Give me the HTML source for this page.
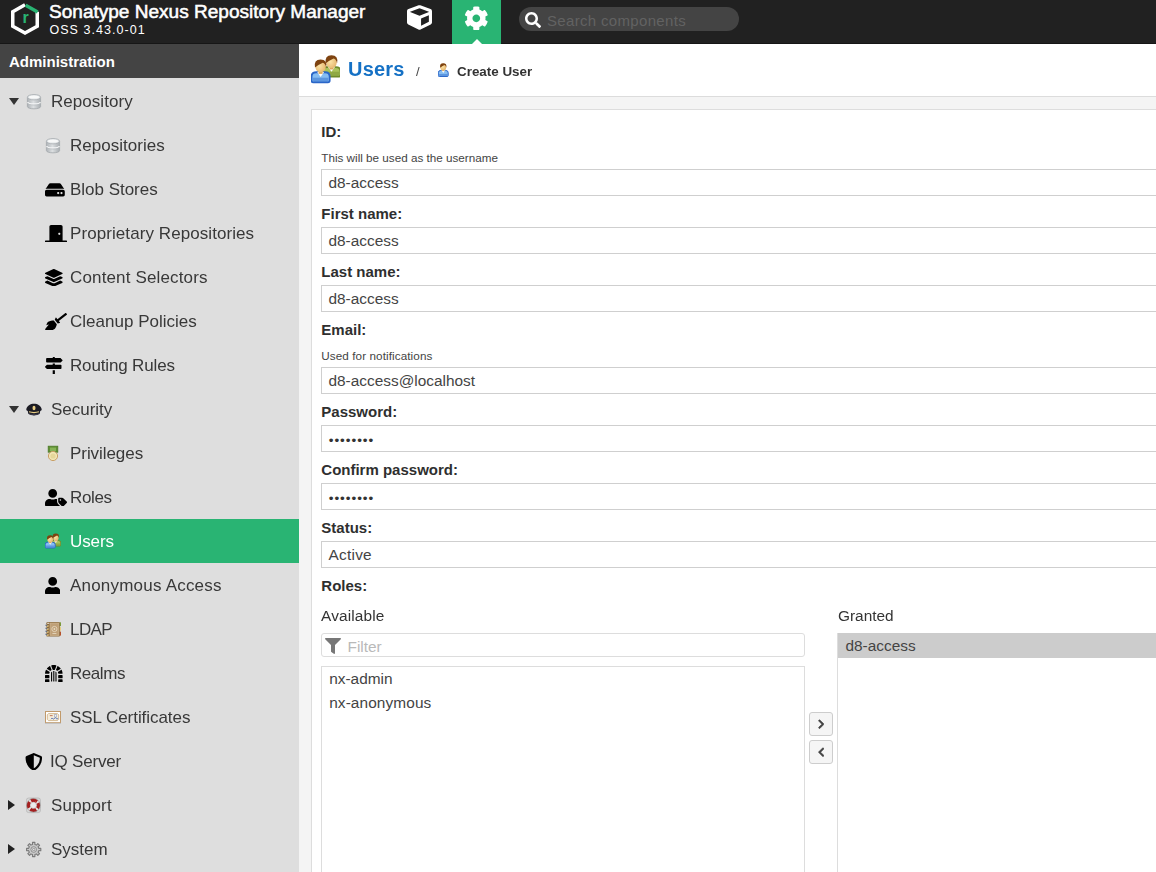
<!DOCTYPE html>
<html lang="en">
<head>
<meta charset="utf-8">
<title>Nexus Repository Manager</title>
<style>
*{box-sizing:border-box;margin:0;padding:0}
html,body{width:1156px;height:872px;overflow:hidden;background:#f4f4f4;font-family:"Liberation Sans",Arial,sans-serif;color:#333}
body{position:relative}
.tx{position:absolute;white-space:nowrap}
#header{position:absolute;left:0;top:0;width:1156px;height:44px;background:#212121}
#hline{position:absolute;left:0;top:43px;width:1156px;height:1px;background:#161616}
#modeadmin{position:absolute;left:452px;top:0;width:49px;height:44px;background:#29b473}
#modetri{position:absolute;left:471.500px;top:39px;width:0;height:0;border-left:5px solid transparent;border-right:5px solid transparent;border-bottom:5px solid #fff}
#search{position:absolute;left:519px;top:7px;width:220px;height:23.700px;border-radius:12px;background:#444}
#side{position:absolute;left:0;top:44px;width:299px;height:828px;background:#dedede}
#sidehead{position:absolute;left:0;top:44px;width:299px;height:34px;background:#444}
#selrow{position:absolute;left:0;top:519px;width:299px;height:44px;background:#29b473}
#crumb{position:absolute;left:299px;top:44px;width:857px;height:53px;background:#fff;border-bottom:1px solid #dcdcdc}
#panel{position:absolute;left:311px;top:109px;width:900px;height:800px;background:#fff;border:1px solid #ddd}
.inp{position:absolute;left:321px;width:900px;height:27px;border:1px solid #cfcfcf;background:#fff}
.box{position:absolute;background:#fff;border:1px solid #ddd}
.btn{position:absolute;left:809px;width:24px;height:24px;border:1px solid #cdcdcd;border-radius:3px;background:#f5f5f5}
.arr{position:absolute;width:0;height:0}
</style>
</head>
<body>
<svg width="0" height="0" style="position:absolute"><defs><linearGradient id="gdb" x1="0" x2="1" y1="0" y2="0"><stop offset="0" stop-color="#aeb3b7"/><stop offset=".45" stop-color="#dcdfe1"/><stop offset="1" stop-color="#a9aeb2"/></linearGradient><radialGradient id="gface" cx=".4" cy=".45" r=".7"><stop offset="0" stop-color="#fbe3a6"/><stop offset="1" stop-color="#e3b066"/></radialGradient></defs></svg>

<div id="header"></div><div id="hline"></div>
<svg style="position:absolute;left:8px;top:0" width="34" height="40" viewBox="0 0 34 40"><path d="M29.250 11.800V26.200L17 33.100L4.750 26.200V11.800L17 4.800" fill="none" stroke="#fff" stroke-width="3.500" stroke-linejoin="miter"/><path d="M17.600 5.150L29.600 12" fill="none" stroke="#29b473" stroke-width="3.500"/><text x="17.600" y="23.400" text-anchor="middle" font-family="Liberation Sans, Arial, sans-serif" font-weight="bold" font-size="16" fill="#29b473">r</text></svg>
<div class="tx" style="left:49.3px;top:1px;font-size:17.5px;line-height:23px;font-weight:normal;color:#fff;-webkit-text-stroke:0.5px #fff;transform:scaleX(1.088);transform-origin:0 0;">Sonatype Nexus Repository Manager</div>
<div class="tx" style="left:49.4px;top:22px;font-size:12.5px;line-height:16px;font-weight:normal;color:#fff;letter-spacing:1.05px;">OSS 3.43.0-01</div>
<svg style="position:absolute;left:407.2px;top:5.4px" width="25.00" height="25" viewBox="0 0 512 512"><path fill="#fff" d="M239.1 6.3l-208 78c-18.700 7-31.100 25-31.100 45v225.100c0 18.200 10.300 34.800 26.500 42.900l208 104c13.500 6.800 29.400 6.800 42.900 0l208-104c16.300-8.100 26.500-24.800 26.500-42.900V129.300c0-20-12.400-37.900-31.100-44.900l-208-78C262 2.200 250 2.200 239.100 6.300zM256 68.400l192 72v1.100l-192 78-192-78v-1.100l192-72zm32 356V275.500l160-65v133.900l-160 80z"/></svg>
<div id="modeadmin"></div><div id="modetri"></div>
<svg style="position:absolute;left:464.2px;top:5.6px" width="24.60" height="24.6" viewBox="0 0 512 512"><path fill="#fff" d="M487.4 315.7l-42.600-24.600c4.300-23.200 4.300-47 0-70.200l42.600-24.600c4.900-2.800 7.100-8.600 5.500-14-11.100-35.600-30-67.800-54.700-94.600-3.800-4.100-10-5.100-14.800-2.300L380.800 110c-17.900-15.400-38.500-27.300-60.800-35.100V25.800c0-5.600-3.900-10.500-9.400-11.700-36.700-8.200-74.300-7.800-109.200 0-5.500 1.200-9.400 6.100-9.400 11.700V75c-22.200 7.900-42.800 19.800-60.800 35.100L88.700 85.500c-4.900-2.800-11-1.900-14.800 2.300-24.700 26.700-43.600 58.900-54.700 94.600-1.700 5.400.6 11.200 5.500 14L67.300 221c-4.300 23.200-4.300 47 0 70.200l-42.600 24.600c-4.900 2.800-7.100 8.600-5.500 14 11.100 35.600 30 67.800 54.700 94.600 3.800 4.100 10 5.100 14.800 2.300l42.600-24.600c17.900 15.400 38.500 27.300 60.800 35.100v49.200c0 5.600 3.900 10.500 9.400 11.700 36.700 8.200 74.300 7.800 109.200 0 5.500-1.200 9.400-6.100 9.400-11.700v-49.200c22.200-7.900 42.800-19.800 60.800-35.100l42.600 24.600c4.900 2.800 11 1.900 14.800-2.300 24.700-26.700 43.600-58.900 54.700-94.600 1.500-5.500-.7-11.300-5.600-14.100zM256 336c-44.100 0-80-35.900-80-80s35.900-80 80-80 80 35.900 80 80-35.900 80-80 80z"/></svg>
<div id="search"></div>
<svg style="position:absolute;left:525px;top:12.1px" width="16.00" height="16" viewBox="0 0 512 512"><path fill="#fff" d="M505 442.7L405.3 343c-4.500-4.500-10.600-7-17-7H372c27.600-35.300 44-79.700 44-128C416 93.100 322.900 0 208 0S0 93.100 0 208s93.100 208 208 208c48.300 0 92.700-16.400 128-44v16.300c0 6.400 2.500 12.500 7 17l99.700 99.700c9.400 9.400 24.600 9.400 33.900 0l28.300-28.300c9.400-9.400 9.400-24.600.1-34zM208 336c-70.700 0-128-57.200-128-128 0-70.700 57.200-128 128-128 70.700 0 128 57.200 128 128 0 70.700-57.200 128-128 128z"/></svg>
<div class="tx" style="left:547px;top:11px;font-size:15px;line-height:20px;font-weight:normal;color:#626262;letter-spacing:0.33px;">Search components</div>
<div id="side"></div><div id="sidehead"></div><div id="selrow"></div>
<div class="tx" style="left:9px;top:52px;font-size:15px;line-height:20px;font-weight:bold;color:#fff;">Administration</div>
<div class="arr" style="left:9px;top:97.5px;border-left:5px solid transparent;border-right:5px solid transparent;border-top:7px solid #333"></div>
<svg style="position:absolute;left:26px;top:93px" width="16" height="17" viewBox="0 0 16 17"><path d="M1.400 4.200v9.300c0 3.100 13.200 3.100 13.200 0V4.200z" fill="url(#gdb)" stroke="#a3a8ac" stroke-width=".8"/><path d="M1.800 8.900c0 2.700 12.400 2.700 12.400 0" fill="none" stroke="#f5f6f7" stroke-width="1.300"/><path d="M1.800 10c0 2.700 12.400 2.700 12.400 0" fill="none" stroke="#a9aeb2" stroke-width=".5"/><ellipse cx="8" cy="4.200" rx="6.600" ry="2.700" fill="#dfe2e4" stroke="#a8adb1" stroke-width=".8"/><ellipse cx="8" cy="4" rx="5.200" ry="1.600" fill="#f8f9f9"/></svg>
<div class="tx" style="left:51px;top:91px;font-size:17px;line-height:22px;font-weight:normal;color:#383838;letter-spacing:0.044px;will-change:transform;">Repository</div>
<svg style="position:absolute;left:45px;top:137px" width="16" height="17" viewBox="0 0 16 17"><path d="M1.400 4.200v9.300c0 3.100 13.200 3.100 13.200 0V4.200z" fill="url(#gdb)" stroke="#a3a8ac" stroke-width=".8"/><path d="M1.800 8.900c0 2.700 12.400 2.700 12.400 0" fill="none" stroke="#f5f6f7" stroke-width="1.300"/><path d="M1.800 10c0 2.700 12.400 2.700 12.400 0" fill="none" stroke="#a9aeb2" stroke-width=".5"/><ellipse cx="8" cy="4.200" rx="6.600" ry="2.700" fill="#dfe2e4" stroke="#a8adb1" stroke-width=".8"/><ellipse cx="8" cy="4" rx="5.200" ry="1.600" fill="#f8f9f9"/></svg>
<div class="tx" style="left:70px;top:135px;font-size:17px;line-height:22px;font-weight:normal;color:#383838;letter-spacing:0.029px;will-change:transform;">Repositories</div>
<svg style="position:absolute;left:45px;top:180.89999999999998px" width="19.80" height="17.6" viewBox="0 0 576 512"><path fill="#000" d="M576 304v96c0 26.510-21.490 48-48 48H48c-26.510 0-48-21.490-48-48v-96c0-26.510 21.490-48 48-48h480c26.510 0 48 21.490 48 48zm-48-80a79.557 79.557 0 0 1 30.777 6.165L462.250 85.374A48.003 48.003 0 0 0 422.311 64H153.689a48 48 0 0 0-39.938 21.374L17.223 230.165A79.557 79.557 0 0 1 48 224h480zm-48 96c-17.673 0-32 14.327-32 32s14.327 32 32 32 32-14.327 32-32-14.327-32-32-32zm-96 0c-17.673 0-32 14.327-32 32s14.327 32 32 32 32-14.327 32-32-14.327-32-32-32z"/></svg>
<div class="tx" style="left:70px;top:179px;font-size:17px;line-height:22px;font-weight:normal;color:#383838;letter-spacing:-0.02px;will-change:transform;">Blob Stores</div>
<svg style="position:absolute;left:45px;top:224.89999999999998px" width="22.00" height="17.6" viewBox="0 0 640 512"><path fill="#000" d="M624 448H512V50.800C512 22.780 490.470 0 464 0H175.990c-26.470 0-48 22.780-48 50.800V448H16c-8.840 0-16 7.160-16 16v32c0 8.840 7.160 16 16 16h608c8.840 0 16-7.160 16-16v-32c0-8.840-7.160-16-16-16zM415.990 288c-17.670 0-32-14.330-32-32s14.330-32 32-32 32 14.330 32 32c.010 17.670-14.320 32-32 32z"/></svg>
<div class="tx" style="left:70px;top:223px;font-size:17px;line-height:22px;font-weight:normal;color:#383838;letter-spacing:0.077px;will-change:transform;">Proprietary Repositories</div>
<svg style="position:absolute;left:45px;top:268.9px" width="17.60" height="17.6" viewBox="0 0 512 512"><path fill="#000" d="M12.410 148.020l232.940 105.670c6.800 3.090 14.490 3.090 21.290 0l232.940-105.670c16.550-7.510 16.550-32.520 0-40.030L266.650 2.310a25.607 25.607 0 0 0-21.290 0L12.410 107.980c-16.550 7.510-16.550 32.530 0 40.040zm487.180 88.280l-58.090-26.330-161.640 73.270c-7.560 3.430-15.590 5.170-23.860 5.170s-16.290-1.740-23.860-5.170L70.510 209.970l-58.100 26.330c-16.550 7.500-16.550 32.500 0 40l232.940 105.590c6.800 3.080 14.490 3.080 21.290 0L499.590 276.300c16.550-7.500 16.550-32.500 0-40zm0 127.800l-57.870-26.230-161.860 73.370c-7.560 3.430-15.590 5.170-23.860 5.170s-16.290-1.740-23.860-5.170L70.290 337.870 12.410 364.100c-16.550 7.500-16.550 32.500 0 40l232.940 105.590c6.800 3.080 14.490 3.080 21.290 0L499.590 404.100c16.550-7.500 16.550-32.500 0-40z"/></svg>
<div class="tx" style="left:70.1px;top:267px;font-size:17px;line-height:22px;font-weight:normal;color:#383838;letter-spacing:0.147px;will-change:transform;">Content Selectors</div>
<svg style="position:absolute;left:45px;top:312.9px" width="22.00" height="17.6" viewBox="0 0 640 512"><path fill="#000" d="M256.470 216.770l86.730 109.180s-16.600 102.360-76.570 150.120C206.660 523.850 0 510.190 0 510.190s3.800-23.140 11-55.430l94.620-112.170c3.970-4.700-.870-11.620-6.650-9.500l-60.400 22.090c14.440-41.660 32.720-80.040 54.600-97.470 59.970-47.760 163.300-40.940 163.300-40.940zM636.530 31.030l-19.860-25c-5.490-6.900-15.520-8.050-22.410-2.560l-232.480 177.800-34.140-42.970c-5.090-6.410-15.140-5.210-18.590 2.210l-25.330 54.550 86.730 109.180 58.800-12.450c8-1.690 11.420-11.200 6.340-17.600l-34.090-42.920 232.480-177.800c6.890-5.480 8.040-15.530 2.550-22.440z"/></svg>
<div class="tx" style="left:70.1px;top:311px;font-size:17px;line-height:22px;font-weight:normal;color:#383838;letter-spacing:0.013px;will-change:transform;">Cleanup Policies</div>
<svg style="position:absolute;left:45px;top:356.9px" width="17.60" height="17.6" viewBox="0 0 512 512"><path fill="#000" d="M507.310 84.690L464 41.370c-6-6-14.140-9.370-22.630-9.370H288V16c0-8.840-7.160-16-16-16h-32c-8.840 0-16 7.160-16 16v16H56c-13.250 0-24 10.750-24 24v80c0 13.250 10.750 24 24 24h385.370c8.490 0 16.620-3.370 22.630-9.370l43.310-43.310c6.250-6.260 6.250-16.380 0-22.630zM224 496c0 8.840 7.160 16 16 16h32c8.840 0 16-7.160 16-16V384h-64v112zm232-272H288v-32h-64v32H70.630c-8.490 0-16.620 3.370-22.630 9.370L4.690 276.690c-6.250 6.250-6.250 16.380 0 22.630L48 342.630c6 6 14.140 9.370 22.630 9.370H456c13.250 0 24-10.750 24-24v-80c0-13.250-10.750-24-24-24z"/></svg>
<div class="tx" style="left:70px;top:355px;font-size:17px;line-height:22px;font-weight:normal;color:#383838;letter-spacing:-0.153px;will-change:transform;">Routing Rules</div>
<div class="arr" style="left:9px;top:405.5px;border-left:5px solid transparent;border-right:5px solid transparent;border-top:7px solid #333"></div>
<svg style="position:absolute;left:26px;top:401px" width="16" height="16" viewBox="0 0 16 16"><path d="M0.300 8.300C0.800 4.800 4.500 2.800 8 2.800s7.200 2 7.700 5.500c0.100 1-0.800 1.500-1.500 1.800l-0.300 2.200c-1.500 1.300-3.600 1.900-5.900 1.900s-4.400-0.600-5.900-1.900L1.800 10.100C1.100 9.800 0.200 9.300 0.300 8.300z" fill="#1b1b24"/><path d="M2.200 11.700c1.700 1.600 9.900 1.600 11.600 0l-0.100 1c-1.500 1.200-3.500 1.700-5.700 1.700s-4.200-0.500-5.700-1.700z" fill="#3a3a48"/><ellipse cx="8" cy="7" rx="1.500" ry="2.300" fill="#e9cf86"/><path d="M3 10.800c2.500 0.800 7.500 0.800 10 0" fill="none" stroke="#e9cf86" stroke-width="1.100"/></svg>
<div class="tx" style="left:51px;top:399px;font-size:17px;line-height:22px;font-weight:normal;color:#383838;letter-spacing:-0.021px;will-change:transform;">Security</div>
<svg style="position:absolute;left:45px;top:445px" width="16" height="16" viewBox="0 0 16 16"><rect x="3.200" y="1.200" width="9.600" height="6" fill="#5f8f33" stroke="#4c7a26" stroke-width=".8"/><rect x="5" y="2.600" width="6" height="3.500" fill="#86b356"/><circle cx="8" cy="11" r="4.600" fill="#f1e6b5" stroke="#c9a066" stroke-width="1"/><circle cx="8" cy="11" r="2.600" fill="#e6d79a"/></svg>
<div class="tx" style="left:70px;top:443px;font-size:17px;line-height:22px;font-weight:normal;color:#383838;letter-spacing:-0.061px;will-change:transform;">Privileges</div>
<svg style="position:absolute;left:45px;top:488.9px" width="22.00" height="17.6" viewBox="0 0 640 512"><path fill="#000" d="M630.600 364.900l-90.300-90.200c-12-12-28.300-18.700-45.300-18.700h-79.300c-17.700 0-32 14.300-32 32v79.200c0 17 6.700 33.200 18.700 45.200l90.300 90.200c12.500 12.500 32.800 12.500 45.300 0l92.500-92.500c12.600-12.500 12.600-32.700.1-45.200zm-182.800-21c-13.300 0-24-10.700-24-24s10.700-24 24-24 24 10.700 24 24c0 13.200-10.700 24-24 24zm-223.800-88c70.700 0 128-57.300 128-128C352 57.300 294.700 0 224 0S96 57.300 96 128c0 70.600 57.300 127.900 128 127.900zm127.800 111.200V294c-12.200-3.600-24.900-6.200-38.200-6.200h-16.700c-22.200 10.200-46.900 16-72.900 16s-50.600-5.800-72.900-16h-16.700C60.200 287.900 0 348.100 0 422.300v41.600c0 26.500 21.500 48 48 48h352c15.500 0 29.100-7.500 37.900-18.900l-58-58c-18.100-18.100-28.100-42.200-28.100-67.900z"/></svg>
<div class="tx" style="left:70px;top:487px;font-size:17px;line-height:22px;font-weight:normal;color:#383838;letter-spacing:-0.35px;will-change:transform;">Roles</div>
<svg style="position:absolute;left:45px;top:533px" width="16" height="16" viewBox="0 0 16 16"><path d="M5.800000000000001 12.0V9.799999999999999q0-2.400 2.600-2.400h4.800q2.600 0 2.600 2.400V12.0q0 1-1 1h-8q-1 0-1-1z" fill="#a9c35a" stroke="#6f8a2a" stroke-width="1"/><path d="M6.6000000000000005 10.4h8.400v1.600q0 .6-.6.6h-7.200q-.6 0-.6-.6z" fill="#6f8a2a" opacity=".45"/><path d="M8.9 7.3h3.800l-1.900 2.700z" fill="#fff"/><rect x="9.700000000000001" y="6.199999999999999" width="2.200" height="2.300" fill="#d9a55c"/><ellipse cx="10.8" cy="4.5" rx="2.900" ry="3.300" fill="url(#gface)"/><path d="M7.700000000000001 5.0q-.8-4.400 3.100-4.400t3.100 4.400q-.5-2.200-1.900-2.600q-2.300 1-4.300 2.600z" fill="#7e4310"/><path d="M0.20000000000000018 14.0V11.6q0-2.400 2.600-2.400h4.800q2.600 0 2.600 2.400V14.0q0 1-1 1h-8q-1 0-1-1z" fill="#86bdf2" stroke="#2a66c8" stroke-width="1"/><path d="M1.0 12.4h8.400v1.600q0 .6-.6.6h-7.200q-.6 0-.6-.6z" fill="#2a66c8" opacity=".45"/><path d="M3.3000000000000003 9.1h3.800l-1.900 2.700z" fill="#fff"/><rect x="4.1" y="7.8999999999999995" width="2.200" height="2.300" fill="#d9a55c"/><ellipse cx="5.2" cy="6.199999999999999" rx="2.900" ry="3.300" fill="url(#gface)"/><path d="M2.1 6.7q-.8-4.400 3.100-4.400t3.100 4.400q-.5-2.200-1.900-2.600q-2.300 1-4.300 2.600z" fill="#7e4310"/></svg>
<div class="tx" style="left:69.8px;top:531px;font-size:17px;line-height:22px;font-weight:normal;color:#fff;letter-spacing:-0.1px;will-change:transform;">Users</div>
<svg style="position:absolute;left:45px;top:576.9000000000001px" width="15.40" height="17.6" viewBox="0 0 448 512"><path fill="#000" d="M224 256c70.700 0 128-57.300 128-128S294.700 0 224 0 96 57.300 96 128s57.300 128 128 128zm89.600 32h-16.700c-22.200 10.200-46.900 16-72.900 16s-50.600-5.800-72.900-16h-16.700C60.200 288 0 348.200 0 422.400V464c0 26.500 21.500 48 48 48h352c26.500 0 48-21.500 48-48v-41.600c0-74.200-60.200-134.400-134.400-134.400z"/></svg>
<div class="tx" style="left:69.8px;top:575px;font-size:17px;line-height:22px;font-weight:normal;color:#383838;letter-spacing:0.207px;will-change:transform;">Anonymous Access</div>
<svg style="position:absolute;left:45px;top:621px" width="17" height="16" viewBox="0 0 17 16"><rect x="14.300" y="1.300" width="1.700" height="3.800" fill="#7d9a3c"/><rect x="14.300" y="6" width="1.700" height="3.800" fill="#e8cf82"/><rect x="14.300" y="10.600" width="1.700" height="4" fill="#b5532d"/><rect x="1.400" y="1" width="13.400" height="14.600" rx="1.200" fill="#8a6a3e"/><rect x="5" y="2" width="8.800" height="12.600" fill="#bfa078" stroke="#d4bb96" stroke-width=".6"/><circle cx="9.400" cy="8" r="2.600" fill="none" stroke="#e9dcc4" stroke-width=".8"/><circle cx="9.400" cy="8" r=".9" fill="#e9dcc4"/><rect x="7.400" y="12" width="4" height=".8" fill="#e9dcc4"/><rect x="2.200" y="1.800" width="2" height="1" fill="#f3ece0"/><g fill="#e9c77d"><circle cx="2.800" cy="5" r=".9"/><circle cx="2.800" cy="8" r=".9"/><circle cx="2.800" cy="11" r=".9"/><circle cx="2.800" cy="14" r=".9"/></g><g stroke="#5b6b86" stroke-width=".9"><path d="M.3 4.200l2.200.5M.3 7.200l2.200.5M.3 10.200l2.200.5M.3 13.200l2.200.5"/></g></svg>
<div class="tx" style="left:69.8px;top:619px;font-size:17px;line-height:22px;font-weight:normal;color:#383838;letter-spacing:-0.567px;will-change:transform;">LDAP</div>
<svg style="position:absolute;left:45px;top:664.9000000000001px" width="17.60" height="17.6" viewBox="0 0 512 512"><path fill="#000" d="M128.730 195.320l-82.810-51.760c-8.040-5.020-18.990-2.170-22.930 6.450A254.190 254.190 0 0 0 .54 239.280C-.05 248.370 7.590 256 16.690 256h97.130c7.960 0 14.080-6.250 15.010-14.160 1.090-9.330 3.240-18.330 6.240-26.940 2.560-7.340.25-15.460-6.340-19.580zM319.030 8C298.860 2.820 277.770 0 256 0s-42.860 2.820-63.030 8c-9.170 2.350-13.910 12.600-10.390 21.390l37.470 104.030A16.003 16.003 0 0 0 235.100 144h41.800c6.750 0 12.770-4.230 15.050-10.580l37.470-104.030c3.520-8.790-1.220-19.030-10.390-21.390zM112 288H16c-8.840 0-16 7.160-16 16v64c0 8.840 7.160 16 16 16h96c8.840 0 16-7.160 16-16v-64c0-8.840-7.160-16-16-16zm0 128H16c-8.840 0-16 7.160-16 16v64c0 8.840 7.160 16 16 16h96c8.840 0 16-7.160 16-16v-64c0-8.840-7.160-16-16-16zm77.310-283.670l-36.320-90.800c-3.530-8.830-14.130-12.990-22.420-8.310a257.308 257.308 0 0 0-71.610 59.890c-6.060 7.320-3.850 18.480 4.220 23.520l82.930 51.830c6.510 4.070 14.660 2.620 20.110-2.790 5.180-5.150 10.790-9.850 16.790-14.050 6.280-4.410 9.150-12.170 6.300-19.290zM398.180 256h97.130c9.100 0 16.740-7.630 16.150-16.720a254.135 254.135 0 0 0-22.450-89.270c-3.940-8.620-14.890-11.470-22.930-6.450l-82.810 51.760c-6.590 4.120-8.900 12.240-6.340 19.580 3.010 8.610 5.150 17.620 6.240 26.940.930 7.910 7.050 14.160 15.010 14.160zm54.850-162.890a257.308 257.308 0 0 0-71.610-59.890c-8.280-4.680-18.880-.52-22.420 8.310l-36.320 90.800c-2.850 7.120.020 14.880 6.300 19.280 6 4.200 11.610 8.900 16.790 14.050 5.440 5.410 13.600 6.860 20.110 2.790l82.930-51.830c8.070-5.030 10.290-16.190 4.220-23.510zM496 288h-96c-8.840 0-16 7.160-16 16v64c0 8.840 7.160 16 16 16h96c8.840 0 16-7.160 16-16v-64c0-8.840-7.160-16-16-16zm0 128h-96c-8.840 0-16 7.160-16 16v64c0 8.840 7.160 16 16 16h96c8.840 0 16-7.160 16-16v-64c0-8.840-7.160-16-16-16zM240 177.620V472c0 4.420 3.580 8 8 8h16c4.420 0 8-3.580 8-8V177.620c-5.230-.89-10.520-1.620-16-1.620s-10.770.73-16 1.620zm-64 41.510V472c0 4.420 3.580 8 8 8h16c4.420 0 8-3.580 8-8V189.360c-12.780 7.450-23.840 17.470-32 29.770zm128-29.770V472c0 4.420 3.580 8 8 8h16c4.420 0 8-3.580 8-8V219.130c-8.160-12.300-19.220-22.320-32-29.770z"/></svg>
<div class="tx" style="left:70px;top:663px;font-size:17px;line-height:22px;font-weight:normal;color:#383838;letter-spacing:-0.44px;will-change:transform;">Realms</div>
<svg style="position:absolute;left:45px;top:709px" width="16" height="16" viewBox="0 0 16 16"><rect x=".5" y="2.500" width="15" height="11.200" fill="#fff" stroke="#c19a6b" stroke-width="1"/><path d="M0 14.400h16" stroke="#b9bcc2" stroke-width=".7"/><path d="M3.500 4.600h9l1.200 1.200v4.600l-1.200 1.200h-9l-1.200-1.200V5.800z" fill="#f5eddb" stroke="#c9aa7c" stroke-width=".8"/><rect x="4.800" y="6.300" width="2.800" height=".8" fill="#b05a38"/><rect x="9.300" y="5.700" width="2.400" height="2.400" fill="#eef0f6" stroke="#98a0b4" stroke-width=".6"/><path d="M6 10.200q.8-1.800 1.800-.6t1.800-.2 1.800.1 1.400-.3" fill="none" stroke="#3b5aa6" stroke-width=".8"/></svg>
<div class="tx" style="left:70px;top:707px;font-size:17px;line-height:22px;font-weight:normal;color:#383838;letter-spacing:-0.057px;will-change:transform;">SSL Certificates</div>
<svg style="position:absolute;left:25.25px;top:752.9000000000001px" width="17.60" height="17.6" viewBox="0 0 512 512"><path fill="#000" d="M466.500 83.700l-192-80a48.150 48.150 0 0 0-36.900 0l-192 80C27.700 91.100 16 108.600 16 128c0 198.500 114.500 335.700 221.500 380.300 11.800 4.900 25.100 4.900 36.900 0C360.100 472.600 496 349.300 496 128c0-19.400-11.700-36.900-29.500-44.300zM256.100 446.300l-.1-381 175.900 73.300c-3.300 151.400-82.100 261.100-175.800 307.700z"/></svg>
<div class="tx" style="left:49.6px;top:751px;font-size:17px;line-height:22px;font-weight:normal;color:#383838;letter-spacing:-0.19px;will-change:transform;">IQ Server</div>
<div class="arr" style="left:8px;top:800px;border-top:5px solid transparent;border-bottom:5px solid transparent;border-left:7px solid #222"></div>
<svg style="position:absolute;left:26px;top:797.3px" width="15.400" height="16.400" viewBox="0 0 16 17"><rect x=".4" y="1" width="14.700" height="15.200" rx="2.400" fill="#d6d6d6" stroke="#adadad" stroke-width=".6"/><circle cx="7.700" cy="8.600" r="5.100" fill="#ececec" stroke="#e4e4e4" stroke-width="3.800"/><circle cx="7.700" cy="8.600" r="5.100" fill="none" stroke="#a51f1f" stroke-width="3.800" stroke-dasharray="6.300 1.711" stroke-dashoffset="3.150"/><circle cx="7.700" cy="8.600" r="7.100" fill="none" stroke="#8a8a8a" stroke-width=".5"/><circle cx="7.700" cy="8.600" r="3.200" fill="#ebebeb" stroke="#b5b5b5" stroke-width=".5"/><path d="M4.200 6.300a4.200 4.200 0 0 1 2-1.800M11.200 6.300a4.200 4.200 0 0 0-2-1.800" fill="none" stroke="#d46a6a" stroke-width=".7"/></svg>
<div class="tx" style="left:51px;top:795px;font-size:17px;line-height:22px;font-weight:normal;color:#383838;letter-spacing:0.177px;will-change:transform;">Support</div>
<div class="arr" style="left:8px;top:844px;border-top:5px solid transparent;border-bottom:5px solid transparent;border-left:7px solid #222"></div>
<svg style="position:absolute;left:26px;top:841px" width="16" height="17" viewBox="0 0 16 17"><polygon points="6.57,3.43 6.48,1.40 8.92,1.40 8.83,3.43 10.49,4.11 11.86,2.62 13.58,4.34 12.09,5.71 12.77,7.37 14.80,7.28 14.80,9.72 12.77,9.63 12.09,11.29 13.58,12.66 11.86,14.38 10.49,12.89 8.83,13.57 8.92,15.60 6.48,15.60 6.57,13.57 4.91,12.89 3.54,14.38 1.82,12.66 3.31,11.29 2.63,9.63 0.60,9.72 0.60,7.28 2.63,7.37 3.31,5.71 1.82,4.34 3.54,2.62 4.91,4.11" fill="#c9c9c9" stroke="#7a7a7a" stroke-width="1.100" stroke-linejoin="round"/><circle cx="7.7" cy="8.5" r="2.800" fill="#dcdcdc" stroke="#858585" stroke-width=".9"/><circle cx="7.7" cy="8.5" r="1.200" fill="#e2e2e2" stroke="#858585" stroke-width=".8"/></svg>
<div class="tx" style="left:51px;top:839px;font-size:17px;line-height:22px;font-weight:normal;color:#383838;letter-spacing:-0.02px;will-change:transform;">System</div>
<div id="crumb"></div>
<svg style="position:absolute;left:310.6px;top:54.6px" width="29" height="29" viewBox="0 0 16 16"><path d="M6.300000000000001 10.899999999999999V9.1q0-2.400 2.600-2.400h4.800q2.600 0 2.600 2.400V10.899999999999999q0 1-1 1h-8q-1 0-1-1z" fill="#a9c35a" stroke="#6f8a2a" stroke-width="1"/><path d="M7.1000000000000005 9.299999999999999h8.400v1.600q0 .6-.6.6h-7.200q-.6 0-.6-.6z" fill="#6f8a2a" opacity=".45"/><path d="M9.4 6.6h3.800l-1.900 2.700z" fill="#fff"/><rect x="10.200000000000001" y="5.699999999999999" width="2.200" height="2.300" fill="#d9a55c"/><ellipse cx="11.3" cy="4.0" rx="2.900" ry="3.300" fill="url(#gface)"/><path d="M8.200000000000001 4.5q-.8-4.400 3.100-4.400t3.100 4.400q-.5-2.200-1.900-2.600q-2.300 1-4.300 2.600z" fill="#7e4310"/><path d="M0.2999999999999998 14.1V11.9q0-2.400 2.600-2.400h4.800q2.600 0 2.600 2.400V14.1q0 1-1 1h-8q-1 0-1-1z" fill="#86bdf2" stroke="#2a66c8" stroke-width="1"/><path d="M1.0999999999999996 12.5h8.400v1.600q0 .6-.6.6h-7.200q-.6 0-.6-.6z" fill="#2a66c8" opacity=".45"/><path d="M3.4 9.4h3.800l-1.900 2.700z" fill="#fff"/><rect x="4.199999999999999" y="8.1" width="2.200" height="2.300" fill="#d9a55c"/><ellipse cx="5.3" cy="6.4" rx="2.900" ry="3.300" fill="url(#gface)"/><path d="M2.1999999999999997 6.9q-.8-4.400 3.100-4.400t3.100 4.400q-.5-2.200-1.900-2.600q-2.300 1-4.300 2.600z" fill="#7e4310"/></svg>
<div class="tx" style="left:347.5px;top:56px;font-size:20px;line-height:26px;font-weight:bold;color:#1571c5;letter-spacing:0.2px;will-change:transform;">Users</div>
<div class="tx" style="left:416px;top:63px;font-size:13px;line-height:17px;font-weight:normal;color:#444;will-change:transform;">/</div>
<svg style="position:absolute;left:438px;top:62.8px" width="10.5" height="14.5" viewBox="0 0 10.600 14.500"><path d="M0.2999999999999998 12.600000000000001V9.8q0-2.400 2.600-2.400h4.800q2.600 0 2.600 2.400V12.600000000000001q0 1-1 1h-8q-1 0-1-1z" fill="#86bdf2" stroke="#2a66c8" stroke-width="1"/><path d="M1.0999999999999996 11.000000000000002h8.400v1.600q0 .6-.6.6h-7.200q-.6 0-.6-.6z" fill="#2a66c8" opacity=".45"/><path d="M3.4 7.300000000000001h3.800l-1.900 2.700z" fill="#fff"/><rect x="4.199999999999999" y="5.8" width="2.200" height="2.300" fill="#d9a55c"/><ellipse cx="5.3" cy="4.1" rx="2.900" ry="3.300" fill="url(#gface)"/><path d="M2.1999999999999997 4.6000000000000005q-.8-4.400 3.100-4.400t3.100 4.400q-.5-2.200-1.900-2.600q-2.300 1-4.300 2.600z" fill="#7e4310"/></svg>
<div class="tx" style="left:457.2px;top:63px;font-size:13.4px;line-height:17px;font-weight:bold;color:#333;will-change:transform;">Create User</div>
<div id="panel"></div>
<div class="tx" style="left:321.3px;top:122px;font-size:15px;line-height:20px;font-weight:bold;color:#2f2f2f;">ID:</div>
<div class="tx" style="left:321.3px;top:150px;font-size:11.7px;line-height:15px;font-weight:normal;color:#444;">This will be used as the username</div>
<div class="inp" style="top:169px"></div><div class="tx" style="left:328.5px;top:173px;font-size:15.4px;line-height:20px;font-weight:normal;color:#444;">d8-access</div>
<div class="tx" style="left:321.3px;top:204px;font-size:15px;line-height:20px;font-weight:bold;color:#2f2f2f;">First name:</div>
<div class="inp" style="top:227px"></div><div class="tx" style="left:328.5px;top:231px;font-size:15.4px;line-height:20px;font-weight:normal;color:#444;">d8-access</div>
<div class="tx" style="left:321.3px;top:262px;font-size:15px;line-height:20px;font-weight:bold;color:#2f2f2f;">Last name:</div>
<div class="inp" style="top:285px"></div><div class="tx" style="left:328.5px;top:289px;font-size:15.4px;line-height:20px;font-weight:normal;color:#444;">d8-access</div>
<div class="tx" style="left:321.3px;top:320px;font-size:15px;line-height:20px;font-weight:bold;color:#2f2f2f;">Email:</div>
<div class="tx" style="left:321.3px;top:348px;font-size:11.7px;line-height:15px;font-weight:normal;color:#444;letter-spacing:0.09px;">Used for notifications</div>
<div class="inp" style="top:367px"></div><div class="tx" style="left:328.5px;top:371px;font-size:15.4px;line-height:20px;font-weight:normal;color:#444;">d8-access@localhost</div>
<div class="tx" style="left:321.3px;top:402px;font-size:15px;line-height:20px;font-weight:bold;color:#2f2f2f;">Password:</div>
<div class="inp" style="top:425px"></div>
<div class="tx" style="left:321.3px;top:460px;font-size:15px;line-height:20px;font-weight:bold;color:#2f2f2f;">Confirm password:</div>
<div class="inp" style="top:483px"></div>
<div class="tx" style="left:328.700px;top:431px;font-size:13.500px;line-height:20px;letter-spacing:0.97px;color:#333">&bull;&bull;&bull;&bull;&bull;&bull;&bull;&bull;</div>
<div class="tx" style="left:328.700px;top:489px;font-size:13.500px;line-height:20px;letter-spacing:0.97px;color:#333">&bull;&bull;&bull;&bull;&bull;&bull;&bull;&bull;</div>
<div class="tx" style="left:321.3px;top:518px;font-size:15px;line-height:20px;font-weight:bold;color:#2f2f2f;">Status:</div>
<div class="inp" style="top:541px"></div><div class="tx" style="left:328.5px;top:545px;font-size:15.4px;line-height:20px;font-weight:normal;color:#444;letter-spacing:0.25px;">Active</div>
<div class="tx" style="left:321.3px;top:576px;font-size:15px;line-height:20px;font-weight:bold;color:#2f2f2f;">Roles:</div>
<div class="tx" style="left:321px;top:606px;font-size:15.4px;line-height:20px;font-weight:normal;color:#333;letter-spacing:0.15px;will-change:transform;">Available</div>
<div class="tx" style="left:837.5px;top:606px;font-size:15.4px;line-height:20px;font-weight:normal;color:#333;will-change:transform;">Granted</div>
<div class="box" style="left:321px;top:633px;width:484px;height:24px;border-radius:3px"></div>
<svg style="position:absolute;left:325px;top:638.2px" width="16.00" height="16" viewBox="0 0 512 512"><path fill="#777" d="M487.976 0H24.028C2.710 0-8.047 25.866 7.058 40.971L192 225.941V432c0 7.831 3.821 15.170 10.237 19.662l80 55.980C298.020 518.690 320 507.493 320 487.980V225.941l184.947-184.970C520.021 25.896 509.338 0 487.976 0z"/></svg>
<div class="tx" style="left:347.5px;top:637px;font-size:15.4px;line-height:20px;font-weight:normal;color:#b9b9b9;">Filter</div>
<div class="box" style="left:321px;top:666px;width:484px;height:300px"></div>
<div class="tx" style="left:329.2px;top:669px;font-size:15.4px;line-height:20px;font-weight:normal;color:#444;">nx-admin</div>
<div class="tx" style="left:329.2px;top:693px;font-size:15.4px;line-height:20px;font-weight:normal;color:#444;letter-spacing:0.1px;">nx-anonymous</div>
<div class="btn" style="top:712px"></div><div class="btn" style="top:740px"></div>
<svg style="position:absolute;left:817.65px;top:718.75px" width="6.50" height="10.4" viewBox="0 0 320 512"><path stroke="#444" stroke-width="28" fill="#444" d="M285.476 272.971L91.132 467.314c-9.373 9.373-24.569 9.373-33.941 0l-22.667-22.667c-9.357-9.357-9.375-24.522-.04-33.901L188.505 256 34.484 101.255c-9.335-9.379-9.317-24.544.04-33.901l22.667-22.667c9.373-9.373 24.569-9.373 33.941 0L285.475 239.030c9.373 9.372 9.373 24.568.001 33.941z"/></svg>
<svg style="position:absolute;left:817.7px;top:746.8px" width="6.50" height="10.4" viewBox="0 0 320 512"><path stroke="#444" stroke-width="28" fill="#444" d="M34.520 239.030L228.870 44.690c9.370-9.370 24.570-9.370 33.940 0l22.670 22.670c9.360 9.360 9.370 24.520.04 33.900L131.490 256l154.020 154.750c9.340 9.380 9.320 24.540-.04 33.900l-22.670 22.670c-9.370 9.370-24.570 9.370-33.940 0L34.520 272.970c-9.370-9.370-9.370-24.570 0-33.940z"/></svg>
<div class="box" style="left:837px;top:633px;width:400px;height:330px"></div>
<div style="position:absolute;left:838px;top:633px;width:400px;height:25px;background:#ccc"></div>
<div class="tx" style="left:845.5px;top:636px;font-size:15.4px;line-height:20px;font-weight:normal;color:#444;">d8-access</div>
</body></html>
